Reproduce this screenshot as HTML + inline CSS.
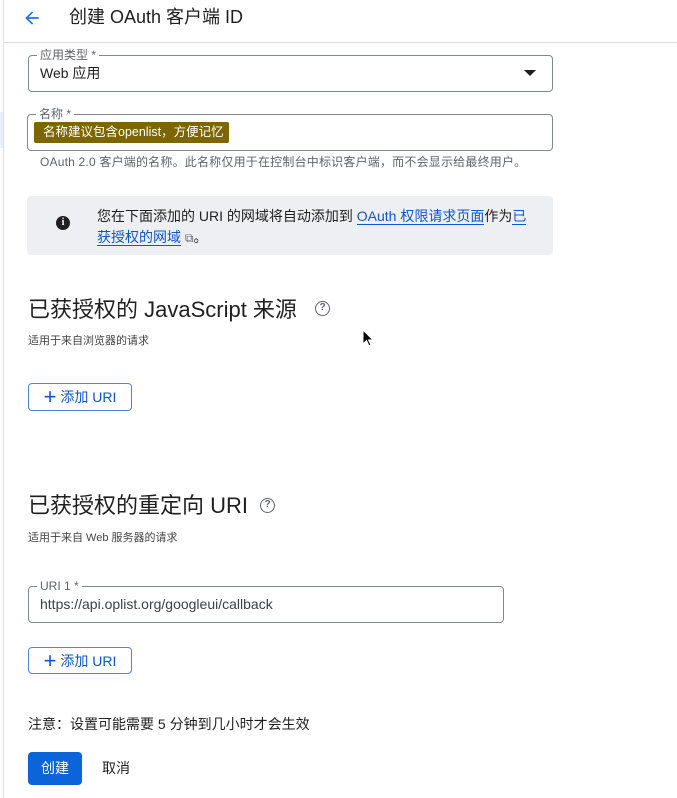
<!DOCTYPE html>
<html><head><meta charset="utf-8"><style>
*{margin:0;padding:0;box-sizing:border-box}
body{width:677px;height:798px;background:#fff;font-family:"Liberation Sans","Noto Sans CJK SC",sans-serif;color:#1f1f1f;position:relative;overflow:hidden}
.a{position:absolute;white-space:nowrap}
.lb{position:absolute;background:#fff;padding:0 3px;font-size:12px;color:#5f6368;line-height:12px}
.box{position:absolute;border:1px solid #80868b;border-radius:4px}
.btn{position:absolute;border:1px solid #4a86e0;border-radius:4px;color:#0b57d0;font-size:14px;display:flex;align-items:center;justify-content:center;gap:4px}
a{color:#0b57d0;text-decoration:none;border-bottom:1px solid #0b57d0}
</style></head><body>
<div class="a" style="left:3px;top:0;width:1px;height:798px;background:#dadce0"></div>
<div class="a" style="left:0;top:112px;width:3px;height:36px;background:#e8f0fe"></div>
<div class="a" style="left:4px;top:42px;width:673px;height:1px;background:#dadce0"></div>
<svg class="a" style="left:22px;top:8px" width="20" height="20" viewBox="0 0 24 24"><path d="M20 11H7.8l5.6-5.6L12 4l-8 8 8 8 1.4-1.4L7.8 13H20z" fill="#1a73e8"/></svg>
<div class="a" style="left:69px;top:6px;font-size:18px;line-height:22px">创建 OAuth 客户端 ID</div>

<div class="box" style="left:28px;top:55px;width:525px;height:37px"></div>
<div class="lb" style="left:37px;top:49px">应用类型 *</div>
<div class="a" style="left:40px;top:64px;font-size:14px;line-height:18px">Web 应用</div>
<div class="a" style="left:524px;top:70px;width:0;height:0;border-left:6px solid transparent;border-right:6px solid transparent;border-top:6px solid #1f1f1f"></div>

<div class="box" style="left:27px;top:114px;width:526px;height:37px"></div>
<div class="lb" style="left:36px;top:108px">名称 *</div>
<div class="a" style="left:34px;top:122px;width:195px;height:21px;background:#7d6600;border-radius:2px;color:#fff;font-size:12.5px;line-height:21px;padding-left:9px">名称建议包含openlist，方便记忆</div>
<div class="a" style="left:40px;top:155px;font-size:12px;color:#5f6368;line-height:14px;letter-spacing:0.2px">OAuth 2.0 客户端的名称。此名称仅用于在控制台中标识客户端，而不会显示给最终用户。</div>

<div class="a" style="left:27px;top:196px;width:526px;height:59px;background:#edeff3;border-radius:4px"></div>
<div class="a" style="left:56px;top:216px;width:14px;height:14px;border-radius:50%;background:#1f1f1f;color:#fff;font-size:10px;font-weight:bold;text-align:center;line-height:14px;font-family:'Liberation Serif',serif">i</div>
<div class="a" style="left:97px;top:206px;font-size:14px;line-height:21px;color:#1f1f1f">您在下面添加的 URI 的网域将自动添加到 <a>OAuth 权限请求页面</a>作为<a>已</a><br><a>获授权的网域</a> <span style="color:#5f6368;font-size:12px">⧉</span>。</div>

<div class="a" style="left:28px;top:296px;font-size:22px;line-height:28px">已获授权的 JavaScript 来源</div>
<div class="a" style="left:315px;top:301px;width:15px;height:15px;border:1.6px solid #5f6368;border-radius:50%;font-size:10px;color:#5f6368;text-align:center;line-height:12px;font-weight:bold">?</div>
<div class="a" style="left:28px;top:334px;font-size:11px;color:#444;line-height:14px">适用于来自浏览器的请求</div>
<div class="btn" style="left:28px;top:383px;width:104px;height:28px"><span style="font-size:22px;line-height:18px">+</span>添加 URI</div>

<div class="a" style="left:28px;top:492px;font-size:22px;line-height:28px">已获授权的重定向 URI</div>
<div class="a" style="left:260px;top:498px;width:15px;height:15px;border:1.6px solid #5f6368;border-radius:50%;font-size:10px;color:#5f6368;text-align:center;line-height:12px;font-weight:bold">?</div>
<div class="a" style="left:28px;top:531px;font-size:11px;color:#444;line-height:14px">适用于来自 Web 服务器的请求</div>

<div class="box" style="left:28px;top:586px;width:476px;height:37px"></div>
<div class="lb" style="left:37px;top:580px">URI 1 *</div>
<div class="a" style="left:40px;top:595px;font-size:14px;line-height:18px;color:#3c4043">https://api.oplist.org/googleui/callback</div>
<div class="btn" style="left:28px;top:647px;width:104px;height:27px"><span style="font-size:22px;line-height:18px">+</span>添加 URI</div>

<div class="a" style="left:28px;top:716px;font-size:14px;line-height:17px">注意：设置可能需要 5 分钟到几小时才会生效</div>
<div class="a" style="left:28px;top:752px;width:54px;height:33px;background:#0b65d8;border-radius:4px;color:#fff;font-size:14px;text-align:center;line-height:33px">创建</div>
<div class="a" style="left:102px;top:752px;font-size:14px;line-height:33px;color:#1f1f1f">取消</div>
<svg class="a" style="left:362px;top:329px" width="12" height="18" viewBox="0 0 12 18"><path d="M1 1v14l3.5-3.5 2.5 5.5 2-1-2.5-5H11z" fill="#000" stroke="#fff" stroke-width="1"/></svg>
</body></html>
